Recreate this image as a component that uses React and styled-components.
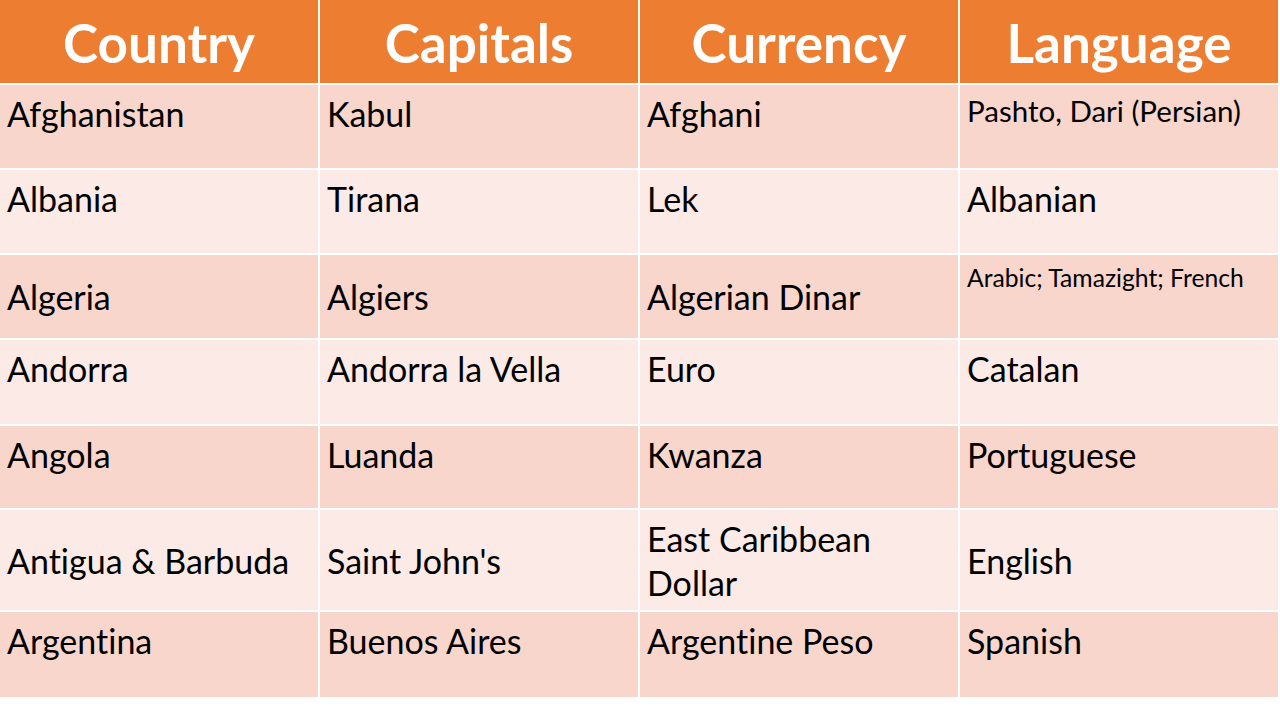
import styled, { createGlobalStyle } from "styled-components";

const GlobalStyle = createGlobalStyle`
  html, body {
    margin: 0;
    padding: 0;
    background: #ffffff;
  }
  body {
    font-family: Lato, "Open Sans", sans-serif;
    font-variant-ligatures: none;
  }
`;

const rows = [
  { h: 83, tone: "dark", cells: ["Afghanistan", "Kabul", "Afghani", "Pashto, Dari (Persian)"], small: 29.5 },
  { h: 83, tone: "light", cells: ["Albania", "Tirana", "Lek", "Albanian"] },
  { h: 83, tone: "dark", cells: ["Algeria", "Algiers", "Algerian Dinar", "Arabic; Tamazight; French"], small: 24.7, center: true },
  { h: 84, tone: "light", cells: ["Andorra", "Andorra la Vella", "Euro", "Catalan"] },
  { h: 82, tone: "dark", cells: ["Angola", "Luanda", "Kwanza", "Portuguese"] },
  { h: 100, tone: "light", cells: ["Antigua & Barbuda", "Saint John's", "East Caribbean Dollar", "English"], center: true },
  { h: 85, tone: "dark", cells: ["Argentina", "Buenos Aires", "Argentine Peso", "Spanish"] },
];

export default function App() {
  return (
    <>
      <GlobalStyle />
      <Table>
        <HeadRow>
          <HeadCell>Country</HeadCell>
          <HeadCell>Capitals</HeadCell>
          <HeadCell>Currency</HeadCell>
          <HeadCell>Language</HeadCell>
        </HeadRow>
        {rows.map((r) => (
          <Row key={r.cells[0]} $h={r.h}>
            {r.cells.map((c, i) => {
              const isSmall = i === 3 && r.small;
              return (
                <Cell
                  key={i}
                  $tone={r.tone}
                  $center={r.center && !isSmall}
                  $size={isSmall ? r.small : 34}
                >
                  {c}
                </Cell>
              );
            })}
          </Row>
        ))}
      </Table>
    </>
  );
}

const Table = styled.div`
  width: 1278px;
  display: flex;
  flex-direction: column;
  gap: 2px;
  background: #ffffff;
`;

const HeadRow = styled.div`
  display: grid;
  grid-template-columns: repeat(4, 1fr);
  column-gap: 2px;
  height: 83px;
`;

const HeadCell = styled.div`
  background: #ed7d31;
  color: #ffffff;
  font-family: Lato, "Open Sans", sans-serif;
  font-weight: 700;
  font-size: 53px;
  display: flex;
  align-items: center;
  justify-content: center;
  padding-top: 1px;
  box-sizing: border-box;
`;

const Row = styled.div`
  display: grid;
  grid-template-columns: repeat(4, 1fr);
  column-gap: 2px;
  height: ${(p) => p.$h}px;
`;

const Cell = styled.div`
  background: ${(p) => (p.$tone === "dark" ? "#f8d6cc" : "#fbeae6")};
  color: #000000;
  font-family: Lato, "Open Sans", sans-serif;
  font-size: ${(p) => p.$size}px;
  line-height: 1.3;
  padding: ${(p) => (p.$center ? "2px" : "7px")} 7px 0 7px;
  box-sizing: border-box;
  display: flex;
  align-items: ${(p) => (p.$center ? "center" : "flex-start")};
`;
